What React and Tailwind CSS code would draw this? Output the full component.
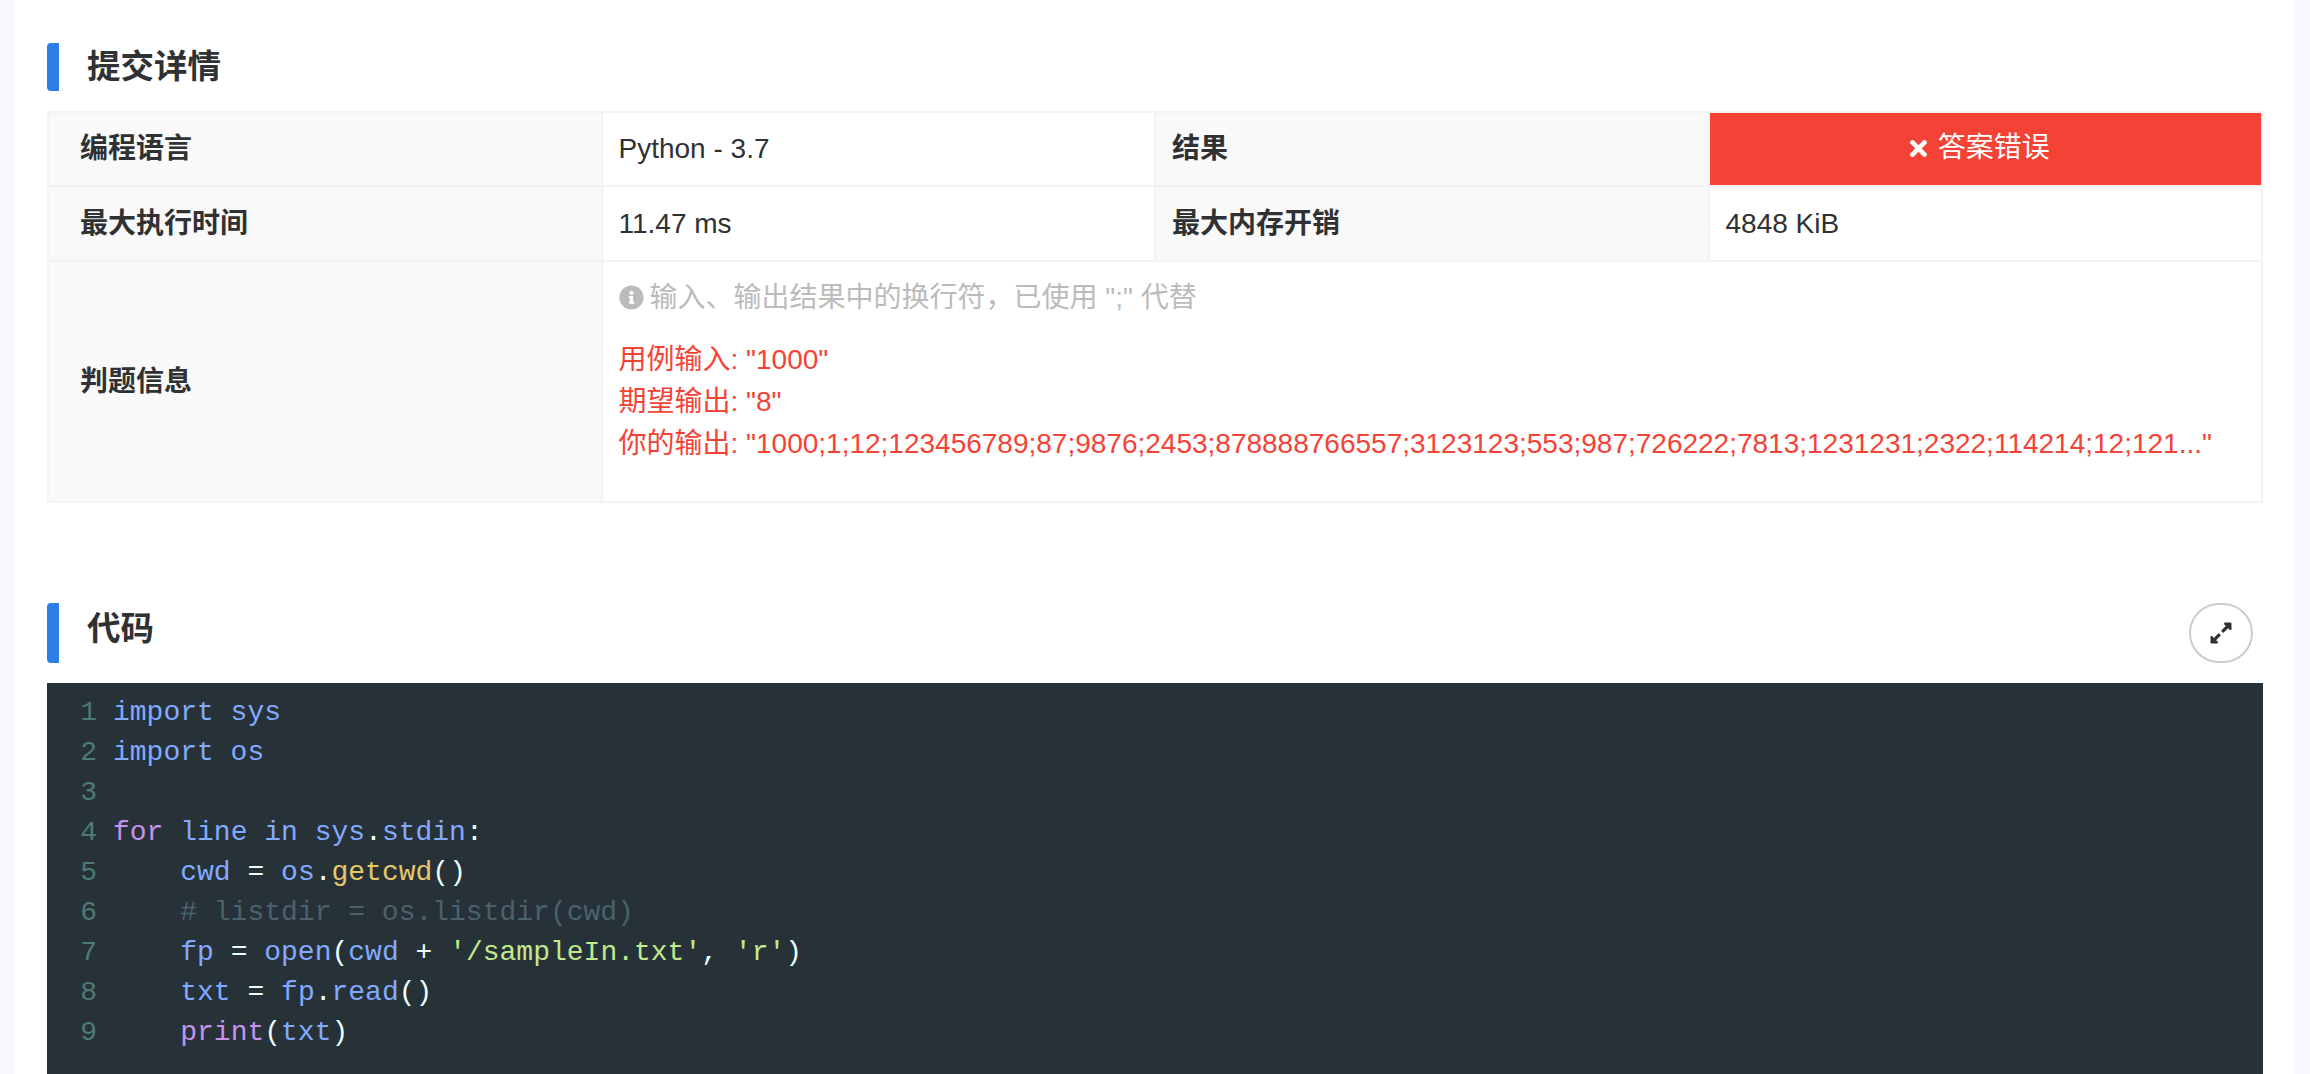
import React from "react";
import { FaTimes, FaInfoCircle, FaExpandAlt } from "react-icons/fa";

const K = ({ c, children }) => <span className={c}>{children}</span>;
const blue = "text-[#82aaff]";
const white = "text-[#eeffff]";
const purple = "text-[#c792ea]";
const green = "text-[#c3e88d]";
const yellow = "text-[#e6c86b]";
const comment = "text-[#4a626d]";

const lines = [
  <><K c={blue}>import sys</K></>,
  <><K c={blue}>import os</K></>,
  <></>,
  <><K c={purple}>for</K> <K c={blue}>line in sys</K><K c={white}>.</K><K c={blue}>stdin</K><K c={white}>:</K></>,
  <>    <K c={blue}>cwd</K> <K c={white}>=</K> <K c={blue}>os</K><K c={white}>.</K><K c={yellow}>getcwd</K><K c={white}>()</K></>,
  <>    <K c={comment}># listdir = os.listdir(cwd)</K></>,
  <>    <K c={blue}>fp</K> <K c={white}>=</K> <K c={blue}>open</K><K c={white}>(</K><K c={blue}>cwd</K> <K c={white}>+</K> <K c={green}>'/sampleIn.txt'</K><K c={white}>,</K> <K c={green}>'r'</K><K c={white}>)</K></>,
  <>    <K c={blue}>txt</K> <K c={white}>=</K> <K c={blue}>fp</K><K c={white}>.</K><K c={blue}>read</K><K c={white}>()</K></>,
  <>    <K c={purple}>print</K><K c={white}>(</K><K c={blue}>txt</K><K c={white}>)</K></>,
];

const th = "w-1/4 border-2 border-[#f3f3f3] bg-[#f9f9f9] text-left align-middle font-bold";
const td = "w-1/4 border-2 border-[#f3f3f3] bg-white px-[16px] align-middle font-normal";

export default function App() {
  return (
    <div className="h-screen overflow-hidden bg-[#f7f9ff] px-[15px] text-[28px] text-[#303133] [font-family:'Liberation_Sans','Noto_Sans_CJK_SC',sans-serif]">
      <div className="h-full bg-white px-[32px] pt-[43px]">
        <div className="flex h-[48px] items-center rounded-l-[4px] border-l-[12px] border-[#2b7fe6] pl-[28px] text-[33.5px] leading-none font-bold">
          提交详情
        </div>
        <table className="mt-[20px] w-full table-fixed border-collapse">
          <tbody>
            <tr className="h-[74px]">
              <th className={th + " pl-[31px]"}>编程语言</th>
              <td className={td}>Python - 3.7</td>
              <th className={th + " pl-[16px]"}>结果</th>
              <td className="w-1/4 border-2 border-[#f3f3f3] bg-[#f44336] pt-[2px] pr-[13px] text-center align-middle text-white">
                <span className="inline-flex items-center gap-[9px]">
                  <FaTimes className="h-[25px] w-[21px]" />
                  答案错误
                </span>
              </td>
            </tr>
            <tr className="h-[75px]">
              <th className={th + " pl-[31px]"}>最大执行时间</th>
              <td className={td}>11.47 ms</td>
              <th className={th + " pl-[16px]"}>最大内存开销</th>
              <td className={td}>4848 KiB</td>
            </tr>
            <tr className="h-[241px]">
              <th className={th + " pl-[31px]"}>判题信息</th>
              <td colSpan={3} className={td + " pb-[22px]"}>
                <div className="flex items-center gap-[6px] text-[#bbbbbb]">
                  <FaInfoCircle className="h-[25px] w-[25px]" />
                  <span>输入、输出结果中的换行符，已使用 ";" 代替</span>
                </div>
                <div className="mt-[20px] leading-[42px] text-[#f44336]">
                  <div>用例输入: "1000"</div>
                  <div>期望输出: "8"</div>
                  <div>你的输出: "1000;1;12;123456789;87;9876;2453;878888766557;3123123;553;987;726222;7813;1231231;2322;114214;12;121..."</div>
                </div>
              </td>
            </tr>
          </tbody>
        </table>
        <div className="mt-[100px] flex h-[60px] items-center justify-between">
          <div className="flex h-full items-center rounded-l-[4px] border-l-[12px] border-[#2b7fe6] pb-[9px] pl-[28px] text-[33.5px] leading-none font-bold">
            代码
          </div>
          <button className="mr-[10px] flex h-[60px] w-[64px] items-center justify-center rounded-full border-2 border-[#cccccc] bg-white text-[#303133]">
            <FaExpandAlt className="h-[24px] w-[24px]" />
          </button>
        </div>
        <div className="mt-[20px] h-[500px] bg-[#263238] pt-[10px] text-[28px] leading-[40px] [font-family:'Liberation_Mono',monospace]">
          {lines.map((l, i) => (
            <div key={i} className="flex h-[40px]">
              <div className="w-[50px] text-right text-[#4f7a78]">{i + 1}</div>
              <pre className="ml-[16px] [font-family:inherit]">{l}</pre>
            </div>
          ))}
        </div>
      </div>
    </div>
  );
}
